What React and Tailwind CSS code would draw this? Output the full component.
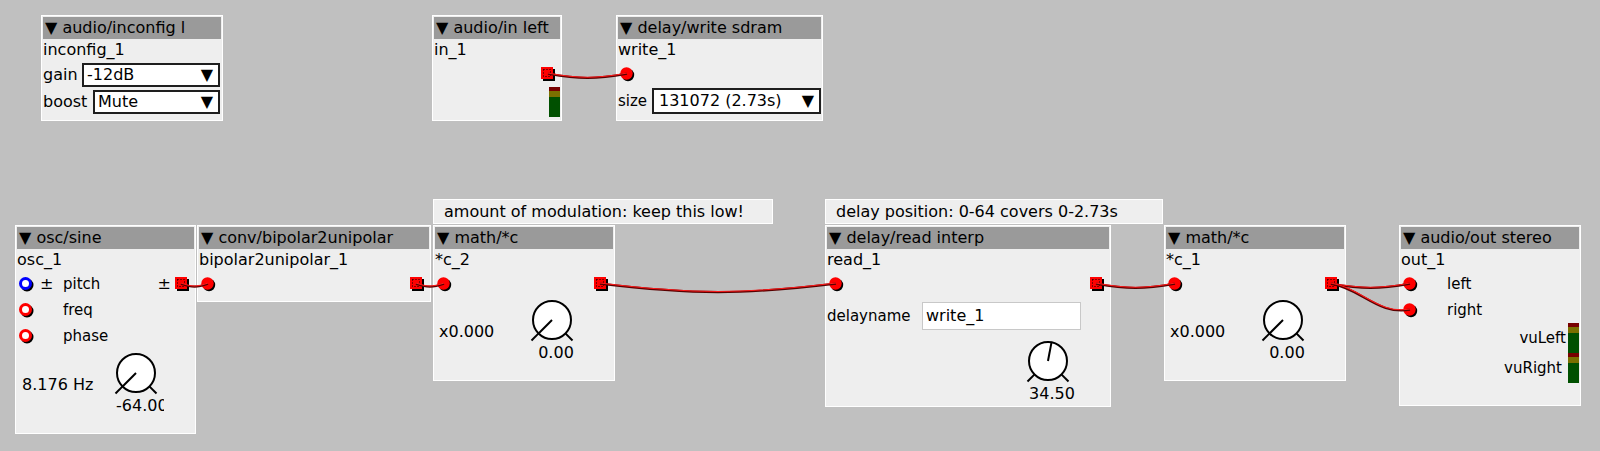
import React from 'react';

const Header = ({ title }) => (
  <div className="h-[22px] shrink-0 bg-[#9a9a9a] px-[2px] text-[16px] leading-[22px] whitespace-nowrap overflow-hidden">
    ▼ {title}
  </div>
);

const Node = ({ className, title, name, children }) => (
  <div className={`absolute flex flex-col border border-white bg-[#eeeeee] p-px ${className}`}>
    <Header title={title} />
    <div className="h-[22px] shrink-0 text-[16px] leading-[22px] whitespace-nowrap">{name}</div>
    {children}
  </div>
);

const Inlet = ({ kind = 'on' }) => {
  if (kind === 'on') {
    return (
      <svg width="15" height="15" viewBox="0 0 15 15">
        <circle cx="8" cy="8" r="6.2" fill="#000" />
        <circle cx="6.5" cy="6.5" r="6.2" fill="#ff0000" />
      </svg>
    );
  }
  const c = kind === 'blue' ? '#0000ff' : '#ff0000';
  return (
    <svg width="15" height="15" viewBox="0 0 15 15">
      <circle cx="8" cy="8" r="5" fill="none" stroke="#000" strokeWidth="3" />
      <circle cx="6.5" cy="6.5" r="5" fill="#fff" stroke={c} strokeWidth="3" />
    </svg>
  );
};

const Outlet = () => (
  <svg width="14" height="14" viewBox="0 0 14 14">
    <rect x="2" y="2" width="12" height="12" fill="#000" />
    <rect x="0" y="0" width="12" height="12" fill="#ff0000" />
    <rect x="2.5" y="2.5" width="7" height="7" fill="none" stroke="#000" strokeWidth="1" strokeDasharray="1 2" />
  </svg>
);

const InletRow = ({ kind, pm, label }) => (
  <div className="h-[26px] flex items-center">
    <div className="w-[22px] pl-[2px] flex items-center">
      <Inlet kind={kind} />
    </div>
    <div className="w-[24px] pl-px text-[16px]">{pm ? '±' : ''}</div>
    <span className="text-[15px]">{label}</span>
  </div>
);

const PortRow = () => (
  <div className="h-[26px] flex items-center justify-between">
    <div className="pl-[2px] flex items-center">
      <Inlet />
    </div>
    <div className="pr-[5px] flex items-center">
      <Outlet />
    </div>
  </div>
);

const Knob = ({ f, label }) => {
  const a = ((-135 + f * 270) * Math.PI) / 180;
  const x = 20 + 19 * Math.sin(a);
  const y = 20 - 19 * Math.cos(a);
  return (
    <div className="w-[48px] flex flex-col">
      <svg width="48" height="43" className="overflow-visible">
        <line x1="6.6" y1="33.4" x2="-0.5" y2="40.5" stroke="#000" strokeWidth="2" />
        <line x1="33.4" y1="33.4" x2="40.5" y2="40.5" stroke="#000" strokeWidth="2" />
        <circle cx="20" cy="20" r="19" fill="#fff" stroke="#000" strokeWidth="2" />
        <line x1="20" y1="20" x2={x} y2={y} stroke="#000" strokeWidth="2" />
      </svg>
      <div className="w-[48px] h-[20px] leading-[20px] text-[16px] text-center overflow-hidden whitespace-nowrap">
        {label}
      </div>
    </div>
  );
};

const Vu = () => (
  <div className="w-[11px] h-[30px] flex flex-col">
    <div className="h-[4px] bg-[#780000]" />
    <div className="h-[6px] bg-[#7a7000]" />
    <div className="flex-1 bg-[#005000]" />
  </div>
);

const Select = ({ value, className }) => (
  <div className={`flex items-center justify-between border-2 border-[#1e1e1e] bg-white pr-[5px] text-[16px] ${className}`}>
    <span>{value}</span>
    <span>▼</span>
  </div>
);

const Comment = ({ className, text }) => (
  <div className={`absolute h-[25px] border border-white bg-[#eeeeee] pl-[10px] text-[16px] leading-[23px] whitespace-nowrap ${className}`}>
    {text}
  </div>
);

const wires = [
  [548, 73, 627, 73],
  [181, 283, 208, 283],
  [416, 283, 444, 283],
  [600, 283, 836, 283],
  [1096, 283, 1175, 283],
  [1331, 283, 1410, 283],
  [1331, 283, 1410, 309],
];

const wirePath = ([x1, y1, x2, y2]) => {
  const dx = x2 - x1;
  const s = 3 + 0.035 * Math.abs(dx);
  return `M${x1} ${y1} C${x1 + dx * 0.4} ${y1 + s} ${x2 - dx * 0.4} ${y2 + s} ${x2} ${y2}`;
};

export default function App() {
  return (
    <div className="relative w-[1600px] h-[451px] overflow-hidden bg-[#c0c0c0] text-black font-['DejaVu_Sans',sans-serif]">
      <Node className="left-[41px] top-[15px] w-[182px] h-[106px]" title="audio/inconfig l" name="inconfig_1">
        <div className="mt-[2px] h-[24px] flex items-center">
          <span className="w-[39px] text-[16px]">gain</span>
          <Select value="-12dB" className="h-[24px] flex-1 mr-px pl-[3px]" />
        </div>
        <div className="mt-[3px] h-[24px] flex items-center">
          <span className="w-[50px] text-[16px]">boost</span>
          <Select value="Mute" className="h-[24px] flex-1 mr-px pl-[3px]" />
        </div>
      </Node>

      <Node className="left-[432px] top-[15px] w-[130px] h-[106px]" title="audio/in left" name="in_1">
        <div className="h-[26px] flex items-center justify-end pr-[5px]">
          <Outlet />
        </div>
        <div className="flex justify-end">
          <Vu />
        </div>
      </Node>

      <Node className="left-[616px] top-[15px] w-[207px] h-[106px]" title="delay/write sdram" name="write_1">
        <InletRow />
        <div className="mt-px h-[26px] flex items-center">
          <span className="w-[34px] text-[15px]">size</span>
          <Select value="131072 (2.73s)" className="h-[26px] flex-1 pl-[5px]" />
        </div>
      </Node>

      <Node className="left-[15px] top-[225px] w-[181px] h-[209px]" title="osc/sine" name="osc_1">
        <div className="flex justify-between">
          <div className="flex flex-col">
            <InletRow kind="blue" pm label="pitch" />
            <InletRow kind="red" label="freq" />
            <InletRow kind="red" label="phase" />
          </div>
          <div className="h-[26px] flex items-center gap-[4px] pr-[5px]">
            <span className="text-[16px]">±</span>
            <Outlet />
          </div>
        </div>
        <div className="pt-[4px] flex items-center">
          <span className="w-[99px] pl-[5px] text-[16px]">8.176 Hz</span>
          <Knob f={0} label="-64.00" />
        </div>
      </Node>

      <Node className="left-[197px] top-[225px] w-[234px] h-[77px]" title="conv/bipolar2unipolar" name="bipolar2unipolar_1">
        <PortRow />
      </Node>

      <Comment className="left-[433px] top-[199px] w-[340px]" text="amount of modulation: keep this low!" />

      <Node className="left-[433px] top-[225px] w-[182px] h-[156px]" title="math/*c" name="*c_2">
        <PortRow />
        <div className="pt-[3px] flex items-center">
          <span className="w-[97px] pl-[4px] text-[16px]">x0.000</span>
          <Knob f={0} label="0.00" />
        </div>
      </Node>

      <Comment className="left-[825px] top-[199px] w-[338px]" text="delay position: 0-64 covers 0-2.73s" />

      <Node className="left-[825px] top-[225px] w-[286px] h-[182px]" title="delay/read interp" name="read_1">
        <PortRow />
        <div className="mt-[5px] h-[28px] flex items-center">
          <span className="w-[95px] text-[15px]">delayname</span>
          <div className="w-[159px] h-[28px] border border-[#c8c8c8] bg-white pl-[3px] text-[16px] leading-[26px]">write_1</div>
        </div>
        <div className="mt-[11px] pl-[201px]">
          <Knob f={34.5 / 64} label="34.50" />
        </div>
      </Node>

      <Node className="left-[1164px] top-[225px] w-[182px] h-[156px]" title="math/*c" name="*c_1">
        <PortRow />
        <div className="pt-[3px] flex items-center">
          <span className="w-[97px] pl-[4px] text-[16px]">x0.000</span>
          <Knob f={0} label="0.00" />
        </div>
      </Node>

      <Node className="left-[1399px] top-[225px] w-[182px] h-[181px]" title="audio/out stereo" name="out_1">
        <InletRow label="left" />
        <InletRow label="right" />
        <div className="h-[30px] flex items-center justify-end gap-[2px]">
          <span className="text-[15px]">vuLeft</span>
          <Vu />
        </div>
        <div className="h-[30px] flex items-center justify-end gap-[6px]">
          <span className="text-[15px]">vuRight</span>
          <Vu />
        </div>
      </Node>

      <svg className="absolute inset-0 pointer-events-none" width="1600" height="451">
        {wires.map((w, i) => (
          <g key={i} fill="none">
            <path d={wirePath(w)} stroke="#5a0000" strokeWidth="2.2" transform="translate(0 0.7)" />
            <path d={wirePath(w)} stroke="#ff1a1a" strokeWidth="1.1" />
          </g>
        ))}
      </svg>
    </div>
  );
}
